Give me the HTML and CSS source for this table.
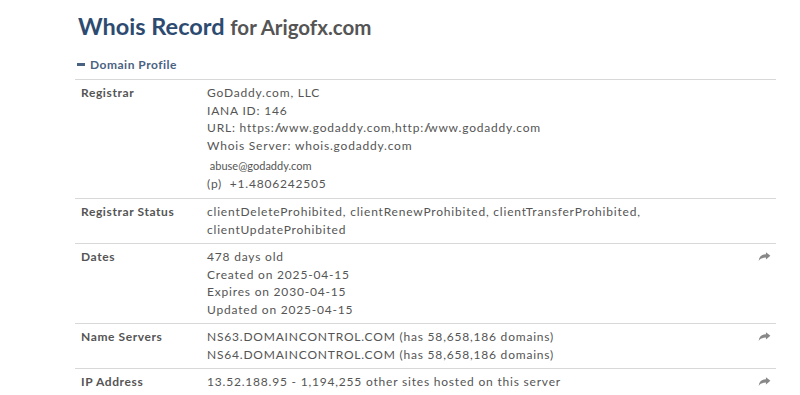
FILE: index.html
```html
<!DOCTYPE html>
<html lang="en">
<head>
  <meta charset="UTF-8" />
  <title>Whois Record for Arigofx.com</title>
  <link rel="stylesheet" href="styles.css">
</head>
<body>
  <div class="page">
    <h1 class="title">Whois Record <span class="for">for Arigofx.com</span></h1>

    <div class="section-head"><span class="dash"></span>Domain Profile</div>

    <div class="profile">
      <div class="row">
        <div class="label">Registrar</div>
        <div class="value">
          <div>GoDaddy.com, LLC</div>
          <div>IANA ID: 146</div>
          <div>URL: https:<span class="sl">//</span>www.godaddy.com,http:<span class="sl">//</span>www.godaddy.com</div>
          <div>Whois Server: whois.godaddy.com</div>
          <div class="contact">
            <div class="mail">&nbsp;abuse@godaddy.com</div>
            <div class="phone">(p)&nbsp; +1.4806242505</div>
          </div>
        </div>
        <div class="act"></div>
      </div>

      <div class="row">
        <div class="label">Registrar Status</div>
        <div class="value">
          <div>clientDeleteProhibited, clientRenewProhibited, clientTransferProhibited,</div>
          <div>clientUpdateProhibited</div>
        </div>
        <div class="act"></div>
      </div>

      <div class="row">
        <div class="label">Dates</div>
        <div class="value">
          <div>478 days old</div>
          <div>Created on 2025-04-15</div>
          <div>Expires on 2030-04-15</div>
          <div>Updated on 2025-04-15</div>
        </div>
        <div class="act">
          <svg class="share" viewBox="0 0 14 11" width="13" height="10"><path d="M13.5 4.2 L8.6 0.3 V2.6 C4 2.6 1 4.8 0.6 10 C2 7.3 4.4 6.1 8.6 6.1 V8.2 Z"/></svg>
        </div>
      </div>

      <div class="row">
        <div class="label">Name Servers</div>
        <div class="value">
          <div>NS63.DOMAINCONTROL.COM (has 58,658,186 domains)</div>
          <div>NS64.DOMAINCONTROL.COM (has 58,658,186 domains)</div>
        </div>
        <div class="act">
          <svg class="share" viewBox="0 0 14 11" width="13" height="10"><path d="M13.5 4.2 L8.6 0.3 V2.6 C4 2.6 1 4.8 0.6 10 C2 7.3 4.4 6.1 8.6 6.1 V8.2 Z"/></svg>
        </div>
      </div>

      <div class="row">
        <div class="label">IP Address</div>
        <div class="value">
          <div>13.52.188.95 - 1,194,255 other sites hosted on this server</div>
        </div>
        <div class="act">
          <svg class="share" viewBox="0 0 14 11" width="13" height="10"><path d="M13.5 4.2 L8.6 0.3 V2.6 C4 2.6 1 4.8 0.6 10 C2 7.3 4.4 6.1 8.6 6.1 V8.2 Z"/></svg>
        </div>
      </div>
    </div>
  </div>
</body>
</html>
```

FILE: styles.css
```css
body {
  margin: 0;
  background: #fff;
  font-family: Lato, "Open Sans", sans-serif;
  color: #555;
}

.page {
  padding: 11px 24px 0 75px;
}

.title {
  margin: 0 0 0 3px;
  font-size: 23.5px;
  font-weight: 700;
  color: #2d4b70;
  line-height: 30px;
}

.title .for {
  font-size: 20.5px;
  color: #555;
  margin-left: 0;
}

.section-head {
  display: flex;
  align-items: center;
  margin: 11px 0 0 2px;
  height: 22px;
  font-size: 12px;
  font-weight: 700;
  letter-spacing: 0.5px;
  color: #4a6282;
}

.dash {
  width: 8px;
  height: 3px;
  background: #4a6282;
  margin-right: 5px;
}

.profile {
  margin-top: 4px;
}

.row {
  display: flex;
  border-top: 1px solid #d8d8d8;
  padding: 4px 0 5px;
  font-size: 12px;
  letter-spacing: 0.8px;
  line-height: 17.5px;
}

.label {
  width: 126px;
  padding-left: 6px;
  font-weight: 700;
  flex-shrink: 0;
  letter-spacing: 0.6px;
}

.value {
  flex: 1;
}

.sl {
  letter-spacing: -2px;
}

.contact {
  margin-top: 3px;
}

.mail {
  font-size: 11px;
  letter-spacing: 0;
  line-height: 18px;
}

.phone {
  line-height: 18px;
}

.act {
  width: 18px;
  padding-top: 1px;
}

.share {
  fill: #888;
}
```
